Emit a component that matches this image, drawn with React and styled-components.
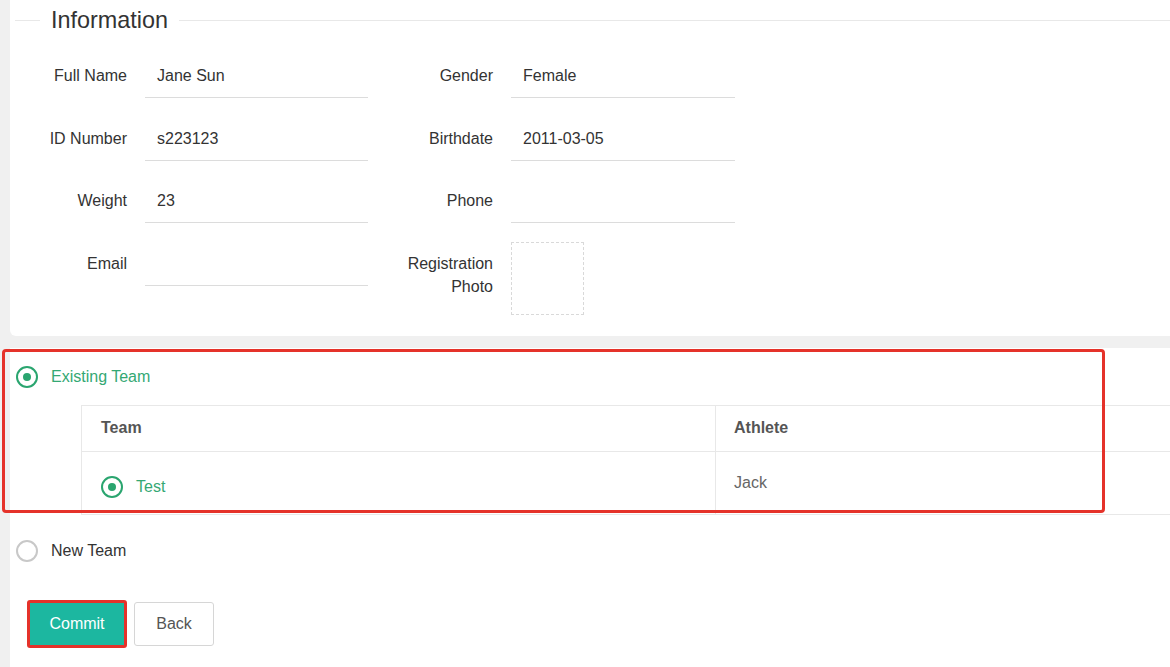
import React from "react";
import styled, { createGlobalStyle } from "styled-components";

const Global = createGlobalStyle`
  html, body { margin: 0; padding: 0; background: #f0f0f0; }
  body { font-family: "Liberation Sans", Arial, sans-serif; color: #333; }
`;

const Page = styled.div`
  padding-left: 10px;
  width: 1160px;
  overflow: hidden;
`;

const Card = styled.section`
  background: #fff;
  border-radius: 0 0 0 6px;
  height: 336px;
  box-sizing: border-box;
  padding: 8px 0 0 5px;
`;

const Legend = styled.div`
  display: flex;
  align-items: center;
  height: 24px;
`;

const Rule = styled.div`
  height: 1px;
  background: #e8e8e8;
  width: ${(p) => (p.$grow ? "auto" : "25px")};
  flex: ${(p) => (p.$grow ? "1" : "none")};
`;

const LegendText = styled.span`
  font-size: 23.4px;
  color: #333;
  padding: 0 11px;
  line-height: 24px;
`;

const FormGrid = styled.div`
  display: grid;
  grid-template-columns: 353px 354px;
  column-gap: 13px;
  row-gap: 18.7px;
  margin-top: 22px;
`;

const Field = styled.div`
  display: grid;
  grid-template-columns: 112px ${(p) => (p.$wide ? 224 : 223)}px;
  column-gap: 18px;
`;

const Label = styled.div`
  text-align: right;
  font-size: 16px;
  line-height: 23px;
  padding-top: 10px;
  color: #333;
`;

const Input = styled.div`
  height: 44px;
  box-sizing: border-box;
  border-bottom: 1px solid #dcdcdc;
  padding-left: 12px;
  font-size: 16px;
  line-height: 43px;
  color: #333;
`;

const PhotoBox = styled.div`
  width: 73px;
  height: 73px;
  box-sizing: border-box;
  border: 1px dashed #d9d9d9;
`;

const Section = styled.section`
  position: relative;
  background: #fff;
  margin-top: 12px;
  height: 319px;
`;

const RadioRow = styled.label`
  display: flex;
  align-items: center;
  height: ${(p) => p.$h}px;
  padding-left: 6px;
  font-size: 16px;
  color: ${(p) => (p.$checked ? "#34a874" : "#333")};
`;

const RadioCircle = styled.span`
  position: relative;
  width: 22px;
  height: 22px;
  box-sizing: border-box;
  border-radius: 50%;
  border: 2px solid ${(p) => (p.$checked ? "#2aa56f" : "#c8c8c8")};
  margin-right: 13px;
  flex: none;
  &::after {
    content: "";
    display: ${(p) => (p.$checked ? "block" : "none")};
    position: absolute;
    left: 5px;
    top: 5px;
    width: 8px;
    height: 8px;
    border-radius: 50%;
    background: #2aa56f;
  }
`;

const Table = styled.div`
  margin-left: 71px;
  border-top: 1px solid #e8e8e8;
  border-left: 1px solid #e8e8e8;
  border-bottom: 1px solid #e8e8e8;
`;

const TRow = styled.div`
  display: grid;
  grid-template-columns: 633px 1fr;
  height: ${(p) => p.$h}px;
  border-top: ${(p) => (p.$first ? "none" : "1px solid #e8e8e8")};
`;

const Cell = styled.div`
  display: flex;
  align-items: center;
  padding-left: ${(p) => (p.$second ? 18 : 19)}px;
  border-left: ${(p) => (p.$second ? "1px solid #e8e8e8" : "none")};
  font-size: 16px;
  font-weight: ${(p) => (p.$head ? 700 : 400)};
  color: ${(p) => (p.$head ? "#555" : "#666")};
  padding-top: ${(p) => (p.$radio ? 7 : 0)}px;
  padding-bottom: ${(p) => (p.$radio ? 0 : 1)}px;
`;

const CellRadio = styled.span`
  display: flex;
  align-items: center;
  color: #34a874;
`;

const Buttons = styled.div`
  display: flex;
  align-items: center;
  gap: 7px;
  padding-left: 17px;
  margin-top: 14px;
`;

const Button = styled.button`
  font-family: "Liberation Sans", Arial, sans-serif;
  font-size: 16px;
  border-radius: 3px;
  box-sizing: border-box;
  cursor: pointer;
  width: ${(p) => (p.$primary ? 100 : 80)}px;
  height: ${(p) => (p.$primary ? 48 : 44)}px;
  background: ${(p) => (p.$primary ? "#1cb7a0" : "#fff")};
  color: ${(p) => (p.$primary ? "#fff" : "#555")};
  border: ${(p) => (p.$primary ? "3px solid #e5322a" : "1px solid #d6d6d6")};
  padding: 0;
`;

const Highlight = styled.div`
  position: absolute;
  left: -8px;
  top: 1px;
  width: 1103px;
  height: 164px;
  box-sizing: border-box;
  border: 3px solid #e5322a;
  border-radius: 4px;
  pointer-events: none;
`;

const fields = [
  ["Full Name", "Jane Sun", "Gender", "Female"],
  ["ID Number", "s223123", "Birthdate", "2011-03-05"],
  ["Weight", "23", "Phone", ""],
];

export default function App() {
  return (
    <>
      <Global />
      <Page>
        <Card>
          <Legend>
            <Rule />
            <LegendText>Information</LegendText>
            <Rule $grow />
          </Legend>
          <FormGrid>
            {fields.map(([l1, v1, l2, v2]) => (
              <React.Fragment key={l1}>
                <Field>
                  <Label>{l1}</Label>
                  <Input>{v1}</Input>
                </Field>
                <Field $wide>
                  <Label>{l2}</Label>
                  <Input>{v2}</Input>
                </Field>
              </React.Fragment>
            ))}
            <Field>
              <Label>Email</Label>
              <Input />
            </Field>
            <Field $wide>
              <Label>
                Registration
                <br />
                Photo
              </Label>
              <PhotoBox />
            </Field>
          </FormGrid>
        </Card>
        <Section>
          <RadioRow $h={57} $checked>
            <RadioCircle $checked />
            Existing Team
          </RadioRow>
          <Table>
            <TRow $h={45} $first>
              <Cell $head>Team</Cell>
              <Cell $head $second>Athlete</Cell>
            </TRow>
            <TRow $h={62}>
              <Cell $radio>
                <CellRadio>
                  <RadioCircle $checked />
                  Test
                </CellRadio>
              </Cell>
              <Cell $second>Jack</Cell>
            </TRow>
          </Table>
          <RadioRow $h={71}>
            <RadioCircle />
            New Team
          </RadioRow>
          <Buttons>
            <Button $primary>Commit</Button>
            <Button>Back</Button>
          </Buttons>
          <Highlight />
        </Section>
      </Page>
    </>
  );
}
